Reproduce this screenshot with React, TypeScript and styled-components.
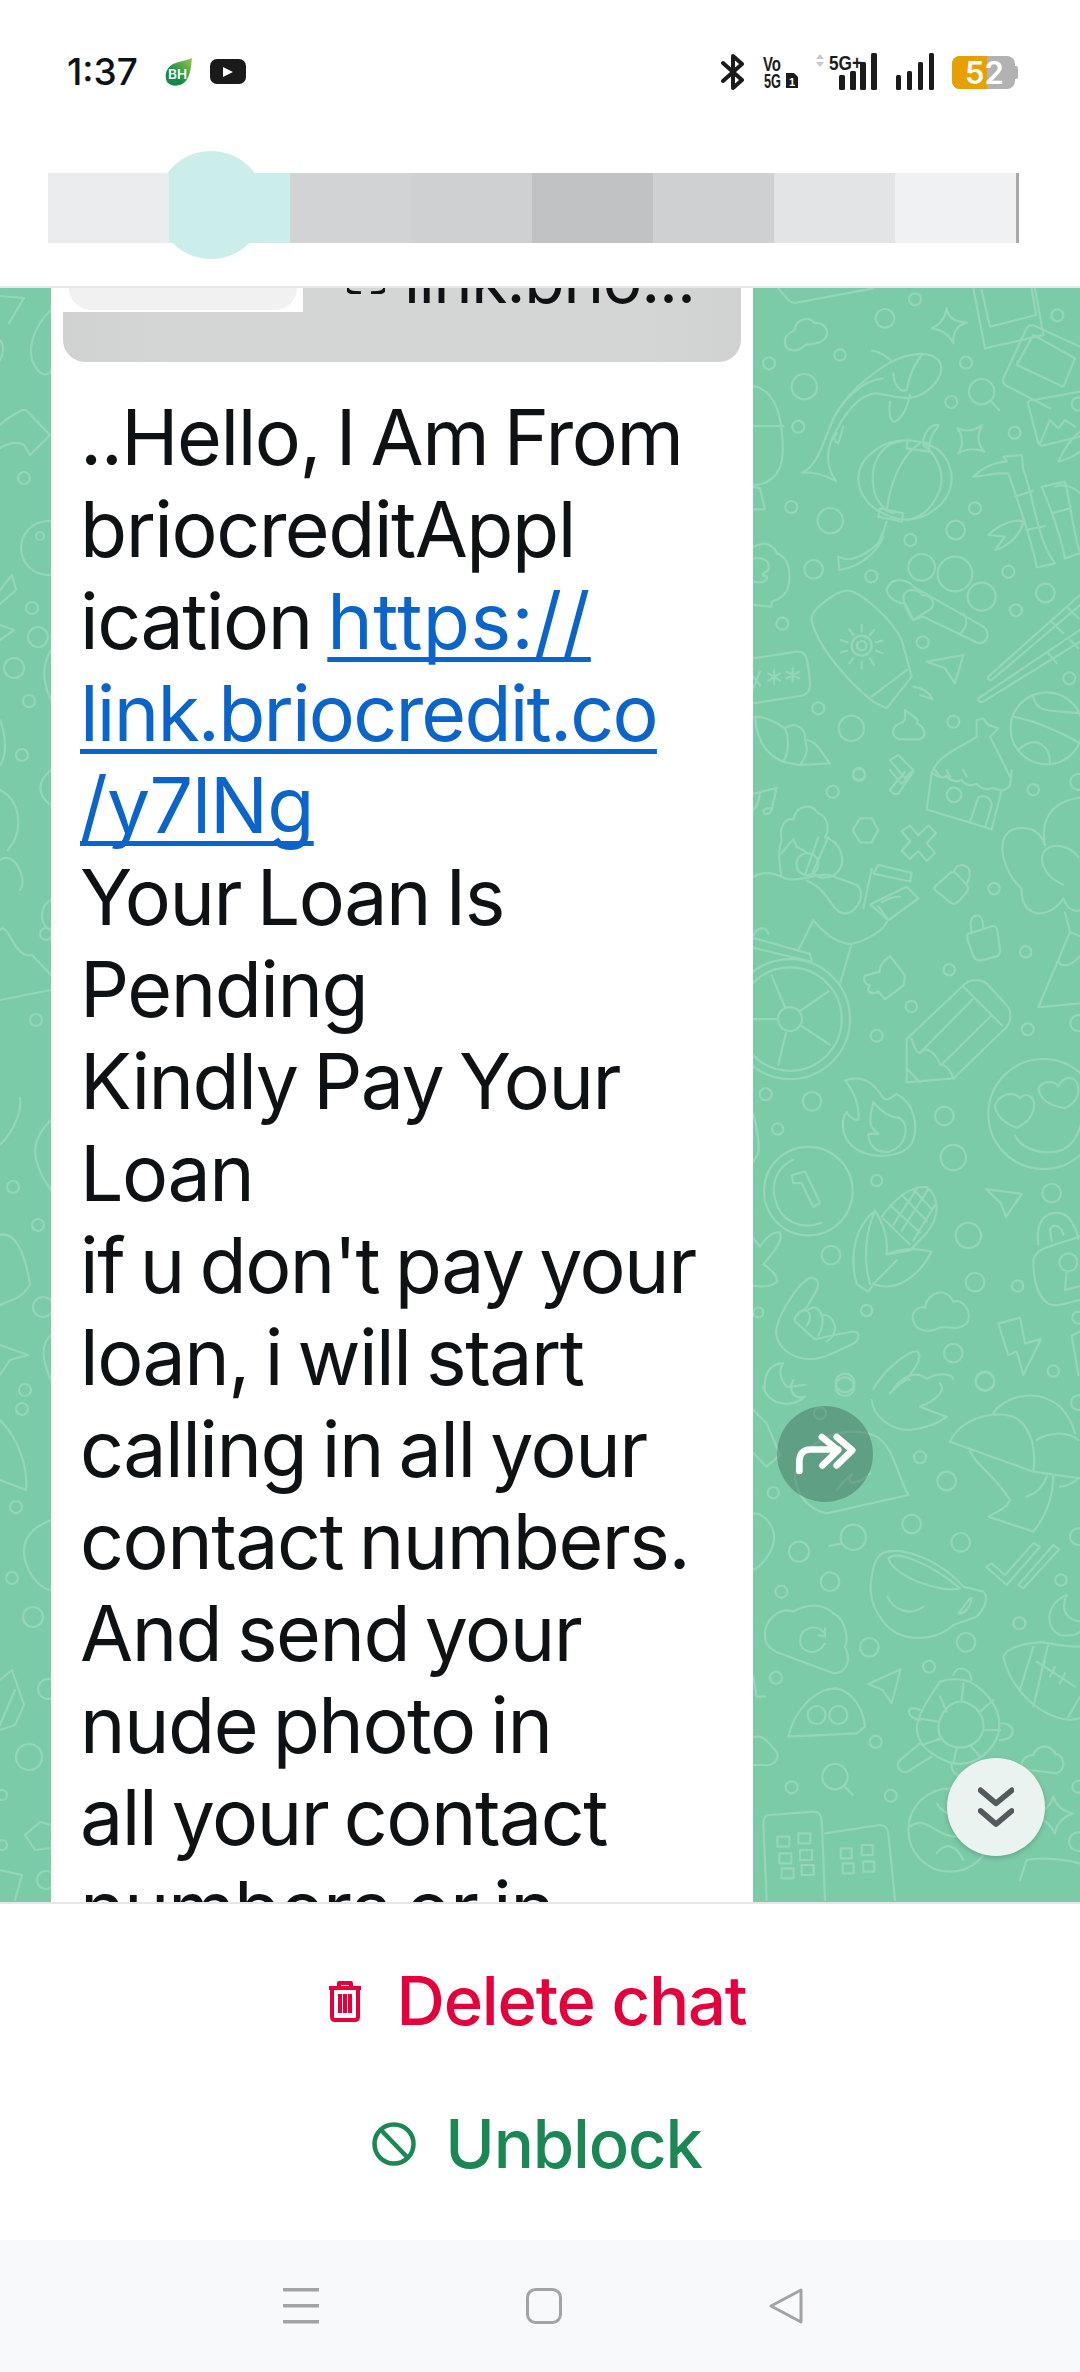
import styled, { createGlobalStyle } from 'styled-components'

const censorCells = ['#ebecee', '#cbeeeb', '#d2d3d5', '#cfd0d2', '#c1c2c4', '#cfd0d2', '#e3e4e6', '#f0f1f3']

type Part = { text: string; link?: boolean; spacing?: number }

const messageLines: Part[][] = [
  [{ text: '..Hello, I Am From' }],
  [{ text: 'briocreditAppl' }],
  [{ text: 'ication ' }, { text: 'https://', link: true, spacing: 0.5 }],
  [{ text: 'link.briocredit.co', link: true, spacing: -1.8 }],
  [{ text: '/y7lNg', link: true, spacing: -0.8 }],
  [{ text: 'Your Loan Is' }],
  [{ text: 'Pending' }],
  [{ text: 'Kindly Pay Your' }],
  [{ text: 'Loan' }],
  [{ text: "if u don't pay your" }],
  [{ text: 'loan, i will start' }],
  [{ text: 'calling in all your' }],
  [{ text: 'contact numbers.' }],
  [{ text: 'And send your' }],
  [{ text: 'nude photo in' }],
  [{ text: 'all your contact' }],
  [{ text: 'numbers or in' }],
]

// doodles are traced from crops, each group keeps the crop's own pixel scale
const doodlesTop = {
  circles: [[495,58,18],[405,115,28],[270,225,17],[57,250,18],[163,320,38],[145,440,18],[648,248,18],[922,106,18],[604,366,18],[794,458,18],[124,681,18],[241,722,38],[675,685,18],[617,750,28],[481,780,18],[191,868,28],[364,889,18],[775,875,18],[886,939,28],[798,991,18],[97,1031,18],[518,1087,18],[958,1195,18],[205,1285,18],[304,1345,38],[610,1325,18],[327,1485,18],[695,335,38],[515,862,40],[615,882,52],[695,950,42],[335,1097,30],[335,1097,14],[890,1345,108],[985,372,20]],
  paths: [
    'M85 25L115 60Q125 70 140 68L370 25',
    'M670 25L705 205L880 165L855 25M695 30L720 140L858 105L845 25',
    'M760 295L830 145Q838 130 855 138L990 200M760 295Q755 310 770 318L900 385M800 255L850 165L975 235L940 320Z',
    'M835 375Q830 360 850 360L990 335M835 375L865 490Q870 500 885 495L990 470M870 490L900 420L925 445L945 420L975 440',
    'M925 545C950 490 970 470 990 455M925 545C950 540 970 530 990 515',
    'M105 190C100 165 125 155 135 150C135 120 175 105 195 130C225 125 245 160 220 180C205 195 180 190 165 195C150 215 110 220 105 190Z',
    'M590 85C595 115 615 125 650 128C620 135 608 160 610 190C595 160 575 150 545 145C570 135 585 115 590 85Z',
    'M622 445C645 455 670 455 697 435C680 465 680 490 703 515C680 505 650 505 625 520C640 495 640 470 622 445Z',
    'M722 362L747 390',
    'M155 578C200 560 215 500 240 440C270 360 340 300 400 260C450 225 530 205 565 240C590 270 560 320 510 345C470 365 420 345 380 340C330 340 280 400 245 480C225 530 235 570 258 603C225 585 190 575 155 578Z',
    'M365 212C385 215 405 225 422 240M400 295C340 300 270 360 240 440M515 225C490 260 480 280 470 330C450 340 430 310 430 280M420 365C415 395 420 425 435 425C460 410 470 385 480 345M260 460C250 470 250 485 265 490L280 440',
    'M473 480L540 490L535 515L470 505ZM520 480C525 455 545 430 565 435C565 445 545 455 540 485M390 685L460 700L455 725L385 710Z',
    'M410 725C400 760 395 770 385 790C340 830 300 850 265 830L268 870C330 860 380 820 400 770',
    'M480 482C400 475 330 530 325 590C322 650 370 700 450 718C530 725 600 670 605 600C605 540 570 500 520 490',
    'M450 485C390 490 360 560 370 620C375 660 400 690 430 700M510 490C460 520 420 600 410 695M520 495C570 530 590 600 560 650C540 690 510 715 470 720',
    'M670 590C700 560 740 545 770 545L760 530L815 525L820 570C850 640 860 780 915 850L860 862C850 800 800 650 775 580C740 575 700 590 670 590ZM795 650L850 632M830 750L885 738',
    'M875 620L945 605C960 660 970 760 990 820L945 835C930 760 900 680 875 620ZM905 700L960 685',
    'M715 765C750 730 800 715 820 725C810 770 770 800 735 810L765 770Z',
    'M915 620C940 610 970 620 990 640',
    'M715 1190L990 945M725 1200L990 975M715 1190Q715 1205 725 1200M685 1255L990 1050M700 1265L990 1085M685 1255Q685 1270 700 1265M905 1025L940 1060M895 1120L920 1150M955 985L985 1015M960 1080L985 1105',
    'M410 930C420 890 470 895 490 920L700 1040C725 1060 710 1090 685 1090L520 1010L490 1020L465 970C450 970 415 960 410 930Z',
    'M460 950C465 925 505 925 515 945C535 945 560 960 545 985L490 1020C475 1000 460 975 460 950ZM640 1000C655 1020 650 1045 630 1060',
    'M185 1020C180 990 260 930 295 932C330 935 430 1020 455 1080L485 1190L410 1285L370 1265C300 1210 200 1100 185 1020ZM365 1250L470 1170M490 1220C520 1225 540 1240 548 1258L510 1245',
    'M335 1035V1055M372 1050L360 1065M397 1082L378 1087M397 1120L378 1112M372 1155L360 1135M335 1165V1145M298 1150L310 1135M272 1118L292 1112M272 1080L292 1087M298 1048L310 1065',
    'M10 1135L140 1115C165 1112 170 1130 175 1160L180 1210C180 1235 170 1245 150 1248L10 1270',
    'M30 1175L10 1225M10 1190L30 1215M72 1170V1212M55 1180L90 1202M55 1202L90 1180M128 1165V1205M110 1175L148 1195M110 1195L148 1175',
    'M530 1145L640 1125L615 1210L585 1165Z',
    'M15 1310C50 1310 90 1335 105 1345C140 1320 170 1350 165 1380C200 1380 215 1420 240 1450L150 1455L120 1450C60 1440 20 1390 15 1310ZM105 1345C120 1380 115 1420 100 1445M165 1380C175 1410 170 1430 150 1455',
    'M465 1290C490 1310 510 1320 500 1330C530 1345 530 1375 505 1378L450 1378C420 1370 425 1340 450 1330C470 1325 465 1310 465 1290Z',
    'M790 1310C850 1320 940 1360 990 1390M850 1250C860 1300 900 1290 990 1300M805 1410C860 1360 900 1400 900 1450',
    'M550 1470C570 1420 640 1400 680 1370L680 1320L700 1315L715 1335L745 1345L720 1370L780 1490M555 1470L570 1490M590 1470L600 1490M640 1470L650 1490',
    'M10 800L40 790C60 790 80 810 80 820C110 830 120 860 118 900C115 950 80 960 65 965L65 980L10 975M10 835C50 830 60 850 55 870C40 880 30 885 50 890C55 905 30 910 10 905',
    'M420 1440L445 1425L490 1470L465 1495Z',
    'M10 318C70 330 100 400 98 520C95 590 50 615 10 615M10 438H100M10 620L30 625L45 688H10',
  ],
}

const doodlesMiddle = {
  circles: [[248,55,18],[850,50,17],[732,300,17],[827,460,17],[598,505,17],[484,598,17],[380,672,18],[833,656,18],[47,820,18],[186,838,28],[83,908,17],[583,875,28],[610,980,38],[380,1038,17],[905,1070,28],[243,1227,28],[655,1177,38],[675,1295,28],[803,1305,17],[350,1367,17],[25,1372,15],[610,1475,28],[910,1520,17],[705,1545,28],[285,1550,28],[327,10,18],[612,63,22],[172,238,33],[120,630,180],[120,630,155],[120,630,36],[880,870,165],[175,1065,133],[955,1245,27],[985,30,24],[985,640,24],[985,1385,18]],
  paths: [
    'M10 60L80 45L65 100C60 115 40 115 40 105C45 95 60 95 65 100M10 100C25 90 30 60 30 55',
    'M420 0L455 35L490 5M420 50L465 5M420 50Q430 65 445 60L490 5',
    'M545 10L530 100L725 150L755 50M545 5Q570 25 590 15Q610 35 635 25Q650 45 680 35Q700 55 730 45Q760 60 780 40L785 0M660 130L685 70C700 60 725 70 725 90L705 145',
    'M308 152L330 122H365L385 152L365 183H330Z',
    'M455 155L480 140L505 165L535 140L558 160L530 185L555 210L530 230L505 205L480 225L455 205L480 180Z',
    'M555 295L598 262Q608 255 618 262L650 290Q658 298 650 310L622 335Q612 342 600 335L558 305Q550 300 555 295ZM612 258C615 240 640 235 655 248C662 258 660 275 652 285',
    'M653 415L725 395Q738 392 742 405L750 455Q750 470 738 472L690 482Q675 482 670 470L653 430Q650 418 653 415ZM665 408C655 380 670 365 685 368C698 372 700 390 700 400',
    'M95 270C85 230 85 200 95 180C85 140 110 120 130 125C140 85 190 85 205 110C240 120 235 160 225 170C270 180 295 230 260 260C240 275 210 275 195 265',
    'M95 210L130 175L140 195L165 205M205 170L165 265M235 170L185 265',
    'M10 270C40 255 70 260 95 270C130 290 200 260 235 265L320 290C335 300 335 320 330 330C320 350 300 370 270 360C240 345 230 300 170 280',
    'M340 350L365 250M385 240L485 260L480 282L370 262ZM360 340L470 295L505 325L415 380ZM385 345L415 380M395 335C420 320 440 320 450 320',
    'M145 455L190 380C230 420 270 440 305 440C350 430 395 410 410 385M305 440L270 540',
    'M10 425L180 465L185 485L10 450M10 420C20 395 50 395 55 415',
    'M65 520L105 600M235 560L150 610M240 695L150 645M85 745L108 665M10 630H85',
    'M345 520L390 510C385 490 410 480 420 470L465 520L460 545L405 580L385 560C365 570 345 560 360 545C340 540 340 525 345 520Z',
    'M470 680L640 545C660 525 695 530 710 540L770 595C790 615 780 640 770 650L610 780L470 790ZM640 548L755 645M510 715L668 580M575 745L725 620M485 680C490 700 505 720 510 715C530 695 560 720 570 745C590 745 605 765 610 780M470 755L510 790',
    'M285 785C340 770 370 790 400 830C420 840 430 820 440 820C490 840 510 900 485 945C450 985 350 985 305 950C270 920 275 880 290 865C300 880 315 885 325 885C330 850 310 810 285 785Z',
    'M370 840C360 880 350 900 385 920L355 920C355 950 380 970 420 965C470 950 480 900 450 880C420 880 390 860 370 840Z',
    'M940 325C890 385 810 370 815 300C760 260 730 170 790 150C830 140 870 150 885 190M885 190C870 130 900 80 990 70M940 290C880 270 860 220 890 200C910 185 960 190 985 220M940 325C950 350 970 360 990 355',
    'M945 360L960 410L865 600L990 590M960 410L990 420M925 480C930 500 960 500 990 470',
    'M735 850C745 820 790 810 810 830C830 810 860 830 850 860C840 890 820 895 800 905C770 895 740 880 735 850Z',
    'M865 805C880 780 920 790 925 800C940 770 985 770 985 810C985 835 960 850 945 855C905 850 870 835 865 805Z',
    'M795 925C820 965 890 975 940 960C970 945 985 920 990 900',
    'M215 1145C150 1165 90 1140 75 1085C60 1040 90 1000 130 985',
    'M125 1025L165 1015L210 1095L190 1105L155 1045L130 1045Z',
    'M320 1300L355 1320L370 1300C430 1320 500 1290 545 1218C490 1205 440 1215 410 1225C415 1180 395 1140 375 1115C320 1150 295 1220 320 1300Z',
    'M395 1130C430 1090 480 1050 530 1055C570 1080 570 1130 530 1170L480 1215L410 1225M420 1100L510 1170M455 1075L530 1140M400 1135L480 1200M490 1060L545 1110M500 1060L430 1150M535 1060L455 1165M555 1100L490 1190M360 1300C340 1240 345 1170 375 1115M370 1300L440 1240',
    'M708 1060L815 1072L768 1130L752 1095Z',
    'M865 1200C855 1140 890 1115 930 1120C960 1125 980 1160 985 1185M905 1190L900 1165C900 1150 930 1145 940 1175M850 1240C860 1210 880 1210 990 1180M850 1240C850 1290 860 1330 895 1350C920 1360 960 1345 990 1340M950 1270L945 1315L990 1305',
    'M80 1410C90 1370 150 1290 185 1283C210 1290 210 1305 190 1330L170 1360C150 1370 130 1380 135 1395L195 1440C240 1430 270 1425 310 1420C335 1420 330 1445 300 1455C260 1470 220 1490 180 1490C130 1490 70 1460 80 1410Z',
    'M135 1385C170 1345 195 1380 170 1405M175 1365C205 1345 235 1385 205 1430M215 1380C245 1370 280 1420 230 1445',
    'M490 1395C480 1365 510 1355 525 1360C530 1320 590 1305 610 1345C640 1335 670 1375 650 1400C620 1420 600 1405 570 1410C540 1425 500 1420 490 1395Z',
    'M745 1400L810 1385L825 1450L872 1440L820 1530L800 1470L775 1480Z',
    'M370 1565C400 1520 470 1470 500 1470C520 1480 500 1510 470 1540M430 1565C470 1520 510 1525 530 1540C570 1520 610 1530 610 1540',
    'M100 1500C60 1500 40 1530 45 1565M100 1500C85 1520 90 1540 110 1560C130 1560 150 1555 165 1555',
    'M10 1185L30 1205C50 1180 70 1165 90 1170C100 1190 70 1220 40 1250C60 1260 85 1280 80 1295C60 1310 30 1305 10 1305',
    'M990 1420L965 1430L985 1530',
    'M10 870C20 900 30 950 25 970L10 990',
  ],
}

const doodlesBottom = {
  circles: [[210,100,18],[510,232,18],[590,303,28],[70,338,17],[485,432,28],[632,487,28],[147,515,30],[240,605,28],[94,635,18],[933,600,17],[808,730,18],[358,802,28],[648,787,28],[537,860,18],[78,893,18],[377,1085,18],[125,1222,18],[422,1247,18],[310,472,38],[200,1005,27],[265,1005,27],[255,1190,38],[285,20,28],[705,5,28],[600,1350,125],[985,68,22],[985,470,25],[985,1220,18],[985,1385,28]],
  paths: [
    'M40 20C50 70 120 90 165 50C130 60 115 30 130 0',
    'M365 60C370 110 420 150 480 150C520 145 560 135 590 110L510 80C560 60 590 30 570 10M420 40C440 20 470 -10 480 0',
    'M600 185C630 120 720 90 790 110C840 135 860 200 850 275ZM850 275L990 295M730 100C760 50 860 20 930 80C960 110 970 140 975 160M860 180C890 160 950 150 985 180',
    'M660 210C670 250 730 280 780 360C770 385 740 395 715 410L850 455C870 430 910 370 910 285M830 350C860 340 880 320 890 290M930 320C950 320 970 310 985 295',
    'M135 290C150 170 300 130 380 170C430 200 440 280 475 345L230 400C180 390 140 350 135 290ZM260 330C290 290 320 270 300 290C290 320 330 310 360 280',
    'M10 90L50 130L90 225L50 260L10 220M275 490L238 498',
    'M390 525C430 490 560 530 640 620L700 635C720 655 700 690 680 710L610 735C570 775 490 785 440 760C390 730 360 670 362 620C365 570 375 540 390 525Z',
    'M415 535C440 510 540 550 630 625C570 640 430 590 415 535ZM660 655L625 700C650 700 660 680 665 655ZM412 650C430 690 480 710 520 680',
    'M708 560L725 550L765 585L850 490L870 500L770 615ZM805 615L910 495L928 508L820 625Z',
    'M950 645C890 670 880 740 930 765C950 770 980 765 990 755M950 645C930 690 950 720 990 725',
    'M45 770C40 720 90 680 130 695C170 670 220 670 250 700C290 720 295 780 285 800C305 840 290 880 250 880L90 820C60 810 45 790 45 770Z',
    'M225 760C200 730 150 740 150 785C155 820 200 830 225 790M225 745L225 770L205 765',
    'M355 912L452 868L425 970L398 930Z',
    'M115 1070C130 1000 190 925 260 925C310 935 340 990 345 1040L320 1060Z',
    'M760 830C770 800 850 780 900 790C950 800 990 800 990 800M760 830C780 920 860 1010 960 1020L990 1015M850 800L810 930M895 790L850 980M955 1010L990 950M860 845L975 920M885 845L875 870M915 860L900 890M945 880L930 910',
    'M610 885C620 855 660 860 665 900M570 905C540 950 510 990 500 1040C500 1090 540 1130 610 1150C680 1160 730 1110 745 1060C760 1000 720 940 660 905C630 895 600 895 570 905Z',
    'M565 1040C570 1000 600 960 640 965C680 975 705 1010 700 1050C690 1090 650 1110 610 1100C580 1090 565 1070 565 1040ZM570 950L590 995M640 910L635 965M730 960L690 995M750 1050H705M690 1130L660 1095M610 1150L620 1105M505 1015L565 1025M515 1095L575 1075',
    'M510 990C470 970 460 1010 510 1020M755 1030C800 1030 800 1080 750 1080M510 1090L450 1140C430 1160 460 1190 480 1170L545 1130M605 1155C605 1180 625 1190 650 1190',
    'M815 1150C820 1130 840 1125 850 1125C860 1095 900 1090 915 1120C950 1130 945 1170 920 1180L840 1170C820 1170 810 1160 815 1150Z',
    'M910 1250C920 1280 940 1295 970 1300C940 1310 920 1330 915 1360C900 1330 880 1315 850 1310C880 1295 900 1280 910 1250Z',
    'M283 1218L308 1245M10 1070L30 1070C50 1075 60 1095 80 1115C90 1135 70 1160 40 1155L10 1155',
    'M40 1330Q40 1305 60 1305L190 1295Q212 1295 215 1320L225 1560M50 1560L40 1330M225 1360L390 1335Q410 1335 415 1360L435 1560',
    'M82 1370H118V1400H82ZM145 1360H181V1390H145ZM88 1420H124V1450H88ZM150 1410H186V1440H150ZM95 1465H131V1495H95ZM155 1455H191V1485H155ZM272 1405H305V1435H272ZM335 1395H368V1425H335ZM278 1450H311V1480H278ZM340 1445H373V1475H340Z',
    'M810 1500L830 1440C880 1430 950 1440 990 1450M10 400C50 400 80 450 70 490C60 530 30 560 10 570M10 890L20 950H45',
    'M480 1340C530 1300 560 1380 640 1370M560 1270C590 1320 650 1310 680 1300M560 1420C590 1380 620 1400 640 1440',
  ],
}

const doodlesLeft = {
  circles: [[24,478,6],[32,608,6],[38,637,10],[14,668,10],[29,701,6],[22,755,6],[46,934,6],[36,1020,6],[13,1187,6],[38,1225,6],[43,1307,10],[25,1390,6],[22,1409,6],[16,1507,6],[12,1578,6],[33,1617,10],[29,1757,13],[48,1689,10],[48,548,27],[40,536,4],[46,1880,9],[2,1795,5],[2,1845,5]],
  paths: [
    'M0 296L24 298L9 323M0 340C5 345 3 355 0 360',
    'M51 310C35 325 28 345 32 360C40 380 50 375 51 370',
    'M0 425C10 415 20 412 22 410L26 410L50 435L30 455L24 445C15 440 5 445 0 448',
    'M0 590L12 575L16 590L0 604M0 625L14 630L0 640',
    'M0 720C8 740 5 760 0 765M51 650C42 665 42 680 51 700M0 790C20 800 25 830 8 850',
    'M51 770C38 780 36 795 51 805M0 860C15 850 28 880 20 890',
    'M0 930C8 920 14 960 32 955L51 975M0 1000L51 990M51 900C40 905 38 925 51 930',
    'M0 1145C15 1130 22 1110 20 1098M51 1190C30 1160 30 1140 51 1120',
    'M0 1235C20 1230 28 1270 30 1285C20 1300 10 1300 0 1305',
    'M0 1345L28 1355L10 1360L0 1375M51 1380C42 1360 40 1345 51 1335',
    'M0 1420C20 1440 28 1470 26 1490L0 1480',
    'M51 1520C25 1530 22 1545 25 1560C30 1580 45 1590 51 1590',
    'M0 1680L12 1670L24 1705L15 1725L0 1730M0 1725L15 1690',
    'M25 1835L40 1822L51 1825M25 1835L35 1850L51 1848M0 1870L22 1875L15 1900',
  ],
}

type Doodle = { circles: number[][]; paths: string[] }

type DoodleGroupProps = { data: Doodle; x: number; y: number; sx: number; sy: number }

const DoodleGroup = ({ data, x, y, sx, sy }: DoodleGroupProps) => (
  <>
    {/* circles stay round even where a crop was squashed */}
    {data.circles.map(([cx, cy, r], i) => (
      <circle key={i} cx={x + cx * sx} cy={y + cy * sy} r={r * sx} />
    ))}
    <g transform={`translate(${x} ${y}) scale(${sx} ${sy})`}>
      {data.paths.map((d, i) => (
        <path key={i} d={d} vectorEffect='non-scaling-stroke' />
      ))}
    </g>
  </>
)

const App = () => {
  return (
    <Page>
      <GlobalStyle />
      <Header>
        <StatusBar>
          <StatusLeft>
            <Time>1:37</Time>
            <svg width='28' height='28' viewBox='0 0 28 28'>
              <defs>
                <linearGradient id='leaf' x1='0' y1='1' x2='1' y2='0'>
                  <stop offset='0.35' stopColor='#138a45' />
                  <stop offset='1' stopColor='#9cc94a' />
                </linearGradient>
              </defs>
              <path d='M27 0C26 8 26 16 21 23C16 29 6 29 2 24C-1 18 1 10 8 6C14 3 21 3 27 0Z' fill='url(#leaf)' />
              <text x='3' y='21' fontSize='13' fontWeight='600' fill='#fff' fontFamily='Inter, sans-serif' textLength='19' lengthAdjust='spacingAndGlyphs'>BH</text>
            </svg>
            <PlayBadge>
              <svg width='10' height='10' viewBox='0 0 10 10'>
                <path d='M0 0L10 5L0 10Z' fill='#fff' />
              </svg>
            </PlayBadge>
          </StatusLeft>
          <StatusRight>
            <svg width='24' height='38' viewBox='0 0 24 38' fill='none' stroke='#1b1b1b' strokeWidth='4'>
              <path d='M2 10L21 27L12 35V3L21 11L2 28' strokeLinejoin='round' strokeLinecap='round' />
            </svg>
            <SmallGlyphs width='36' height='36' viewBox='0 0 36 36' fontFamily='Liberation Sans, sans-serif' fontWeight='700' fill='#1b1b1b'>
              <text x='0' y='18' fontSize='20' textLength='18' lengthAdjust='spacingAndGlyphs'>Vo</text>
              <text x='1' y='35' fontSize='20' textLength='17' lengthAdjust='spacingAndGlyphs'>5G</text>
              <path d='M23 20H31L35 24V35H23Z' />
              <text x='26' y='33' fontSize='11' fill='#fff'>1</text>
            </SmallGlyphs>
            <SmallGlyphs width='62' height='38' viewBox='0 0 62 38'>
              <path d='M0 6L4 1L8 6ZM0 9L4 14L8 9Z' fill='#c8c8c8' />
              <text x='13' y='17' fontSize='20' fontWeight='700' fill='#1b1b1b' fontFamily='Liberation Sans, sans-serif' textLength='33' lengthAdjust='spacingAndGlyphs'>5G+</text>
              <g fill='#1b1b1b'>
                <rect x='23' y='22' width='6' height='15' rx='1.5' />
                <rect x='34' y='18' width='6' height='19' rx='1.5' />
                <rect x='44' y='9' width='6' height='28' rx='1.5' />
                <rect x='55' y='0' width='6' height='37' rx='1.5' />
              </g>
            </SmallGlyphs>
            <svg width='39' height='38' viewBox='0 0 39 38' fill='#1b1b1b'>
              <rect x='0' y='22' width='5' height='15' rx='1.5' />
              <rect x='11' y='18' width='5' height='19' rx='1.5' />
              <rect x='22' y='9' width='5' height='28' rx='1.5' />
              <rect x='33' y='0' width='5' height='37' rx='1.5' />
            </svg>
            <Battery>
              <BatteryLevel />
              <BatteryText>52</BatteryText>
            </Battery>
          </StatusRight>
        </StatusBar>
        <CensorBar>
          <CensorDot />
          {censorCells.map((color, i) => (
            <CensorCell key={i} $color={color} />
          ))}
        </CensorBar>
      </Header>

      <Chat>
        <DoodleLayer viewBox='0 288 1080 1614'>
          <DoodleGroup data={doodlesLeft} x={0} y={0} sx={1} sy={1} />
          <DoodleGroup data={doodlesTop} x={750} y={280} sx={1 / 3} sy={1 / 3} />
          <DoodleGroup data={doodlesMiddle} x={750} y={770} sx={1 / 3} sy={1 / 2.529} />
          <DoodleGroup data={doodlesBottom} x={750} y={1380} sx={1 / 3} sy={1 / 3} />
        </DoodleLayer>
        <Bubble>
          <Quote>
            <Thumb>
              <ThumbInner />
            </Thumb>
            <QuoteLink>
              <svg width='38' height='6' viewBox='0 0 38 6' fill='none' stroke='#111' strokeWidth='3.5'>
                <path d='M0 0C1 4 4 5 14 5M38 0C37 4 34 5 24 5' />
              </svg>
              <QuoteText>link.brio...</QuoteText>
            </QuoteLink>
          </Quote>
          <Message>
            {messageLines.map((line, i) => (
              <Line key={i}>
                {line.map((part, j) =>
                  part.link ? (
                    <MessageLink key={j} $spacing={part.spacing ?? 0}>
                      {part.text}
                    </MessageLink>
                  ) : (
                    <span key={j}>{part.text}</span>
                  ),
                )}
              </Line>
            ))}
          </Message>
        </Bubble>
        <ForwardButton>
          <svg width='62' height='43' viewBox='130 160 185 130' fill='none' stroke='#fff' strokeWidth='20' strokeLinecap='round' strokeLinejoin='round'>
            <path d='M145 275V245C145 225 155 210 180 210H262' />
            <path d='M213 172L262 212L215 258M258 172L305 212L258 258' />
          </svg>
        </ForwardButton>
        <ScrollButton>
          <svg width='36' height='40' viewBox='690 1235 96 105' fill='none' stroke='#54595e' strokeWidth='15' strokeLinecap='round' strokeLinejoin='round'>
            <path d='M697 1243L738 1278L780 1243M697 1298L738 1333L780 1298' />
          </svg>
        </ScrollButton>
      </Chat>

      <ActionPanel>
        <ActionRow $color='#e4003b' $gap={35}>
          <svg width='34' height='42' viewBox='0 0 34 42' fill='none' stroke='currentColor' strokeWidth='4' strokeLinejoin='round'>
            <path d='M1 8H33M11 7V3H23V7M4 8V37Q4 40 7 40H27Q30 40 30 37V8M12 14V33M17 14V33M22 14V33' />
          </svg>
          Delete chat
        </ActionRow>
        <ActionRow $color='#1a8754' $gap={29}>
          <svg width='44' height='44' viewBox='0 0 44 44' fill='none' stroke='currentColor' strokeWidth='4.5'>
            <circle cx='22' cy='22' r='19.5' />
            <path d='M9 8L36 36' />
          </svg>
          Unblock
        </ActionRow>
      </ActionPanel>

      <NavBar>
        <svg width='36' height='36' viewBox='0 0 36 36' fill='#a3a3a3'>
          <rect x='0' y='0' width='36' height='3.5' />
          <rect x='0' y='16' width='36' height='3.5' />
          <rect x='0' y='32' width='36' height='3.5' />
        </svg>
        <svg width='36' height='36' viewBox='0 0 36 36' fill='none' stroke='#a3a3a3' strokeWidth='3'>
          <rect x='1.5' y='1.5' width='33' height='33' rx='8' />
        </svg>
        <svg width='34' height='36' viewBox='0 0 34 36' fill='none' stroke='#a3a3a3' strokeWidth='3' strokeLinejoin='round'>
          <path d='M32 2V34L2 18Z' />
        </svg>
      </NavBar>
    </Page>
  )
}

export default App

const GlobalStyle = createGlobalStyle`
  html, body {
    margin: 0;
    padding: 0;
    background: #fff;
  }
`

const Page = styled.div`
  display: flex;
  flex-direction: column;
  width: 1080px;
  height: 2372px;
  overflow: hidden;
  font-family: Inter, 'Liberation Sans', sans-serif;
  color: #0f1214;
`

const Header = styled.header`
  box-sizing: border-box;
  height: 288px;
  background: #fff;
  border-bottom: 2px solid #e6e6e6;
  padding-bottom: 43px;
`

const StatusBar = styled.div`
  display: flex;
  justify-content: space-between;
  box-sizing: border-box;
  height: 173px;
  padding: 53px 62px 0 67px;
`

const StatusLeft = styled.div`
  display: flex;
  align-items: center;
  gap: 17px;
  height: 37px;
`

const Time = styled.span`
  font-size: 37px;
  font-weight: 500;
  line-height: 37px;
  margin-right: 10px;
`

const PlayBadge = styled.div`
  display: flex;
  align-items: center;
  justify-content: center;
  width: 36px;
  height: 25px;
  background: #1a1a1a;
  border-radius: 7px;
`

const StatusRight = styled.div`
  display: flex;
  align-items: flex-start;
  gap: 17.5px;
`

const SmallGlyphs = styled.svg`
  overflow: visible;
`

const Battery = styled.div`
  position: relative;
  width: 63px;
  height: 33px;
  margin: 3px 3px 0 0;
  background: #b2b2b2;
  border-radius: 8px;

  &::after {
    content: '';
    position: absolute;
    right: -3px;
    top: 10px;
    width: 3px;
    height: 13px;
    background: #b2b2b2;
    border-radius: 0 2px 2px 0;
  }
`

const BatteryLevel = styled.div`
  position: absolute;
  left: 0;
  top: 0;
  bottom: 0;
  width: 35px;
  background: #e6a100;
  border-radius: 8px 0 0 8px;
`

const BatteryText = styled.span`
  position: absolute;
  left: 13px;
  top: 0;
  color: #fff;
  font-size: 31px;
  font-weight: 600;
  line-height: 33px;
`

const CensorBar = styled.div`
  position: relative;
  display: flex;
  height: 70px;
  margin-left: 48px;
  width: 971px;
  border-right: 3px solid #aaaaaa;
  box-sizing: border-box;
`

const CensorDot = styled.div`
  position: absolute;
  left: 109px;
  top: -22px;
  width: 108px;
  height: 108px;
  border-radius: 50%;
  background: #cbeeeb;
`

const CensorCell = styled.div<{ $color: string }>`
  position: relative;
  flex: 1;
  background: ${({ $color }) => $color};
`

const Chat = styled.main`
  position: relative;
  flex: 1;
  min-height: 0;
  overflow: hidden;
  background: #7bcba6;
`

const DoodleLayer = styled.svg`
  position: absolute;
  inset: 0;
  width: 1080px;
  height: 1614px;
  fill: none;
  stroke: #95d6b9;
  stroke-width: 2.2px;
  stroke-linecap: round;
  stroke-linejoin: round;
`

const Bubble = styled.article`
  position: relative;
  box-sizing: border-box;
  width: 702px;
  height: 100%;
  margin-left: 51px;
  padding: 0 12px;
  background: #fff;
  overflow: hidden;
`

const Quote = styled.div`
  display: flex;
  height: 74px;
  background: linear-gradient(90deg, #d0d2d2, #d4d6d6 15%, #d4d6d6 85%, #d0d2d2);
  border-radius: 0 0 22px 22px;
`

const Thumb = styled.div`
  flex: none;
  width: 240px;
  height: 24px;
  background: #fff;
`

const ThumbInner = styled.div`
  width: 228px;
  height: 22px;
  margin-left: 6px;
  background: #f1f1f1;
  border-radius: 0 0 40px 40px;
`

const QuoteLink = styled.div`
  display: flex;
  align-items: flex-start;
  height: 40px;
  overflow: hidden;
  padding-left: 44px;
  gap: 19px;
`

const QuoteText = styled.span`
  margin-top: -55px;
  font-size: 66px;
  line-height: 92px;
  letter-spacing: -1.2px;
  white-space: nowrap;
`

const Message = styled.div`
  padding: 29px 0 0 17px;
  font-size: 77px;
  line-height: 92px;
  letter-spacing: -1.5px;
  word-spacing: -4.5px;
`

const Line = styled.div`
  white-space: nowrap;
`

const MessageLink = styled.span<{ $spacing: number }>`
  color: #0a64c9;
  letter-spacing: ${({ $spacing }) => $spacing}px;
  text-decoration: underline;
  text-decoration-thickness: 5px;
  text-decoration-skip-ink: none;
  text-underline-offset: 8px;
`

const ForwardButton = styled.div`
  position: absolute;
  left: 777px;
  top: 1118px;
  display: flex;
  align-items: center;
  justify-content: center;
  width: 96px;
  height: 96px;
  border-radius: 50%;
  background: rgba(50, 90, 75, 0.38);
`

const ScrollButton = styled.div`
  position: absolute;
  left: 947px;
  top: 1470px;
  display: flex;
  align-items: center;
  justify-content: center;
  width: 98px;
  height: 98px;
  border-radius: 50%;
  background: #eaf3ef;
  box-shadow: 0 2px 5px rgba(0, 0, 0, 0.18);
`

const ActionPanel = styled.section`
  display: flex;
  flex-direction: column;
  justify-content: center;
  box-sizing: border-box;
  height: 338px;
  background: #fff;
  border-top: 2px solid #e6e6e6;
`

const ActionRow = styled.div<{ $color: string; $gap: number }>`
  display: flex;
  align-items: center;
  justify-content: center;
  gap: ${({ $gap }) => $gap}px;
  height: 143px;
  padding-right: 6px;
  color: ${({ $color }) => $color};
  font-size: 67px;
  font-weight: 500;
  letter-spacing: -1.2px;
`

const NavBar = styled.nav`
  display: flex;
  align-items: center;
  gap: 207px;
  height: 132px;
  padding-left: 283px;
  background: #f8f9fb;
`
